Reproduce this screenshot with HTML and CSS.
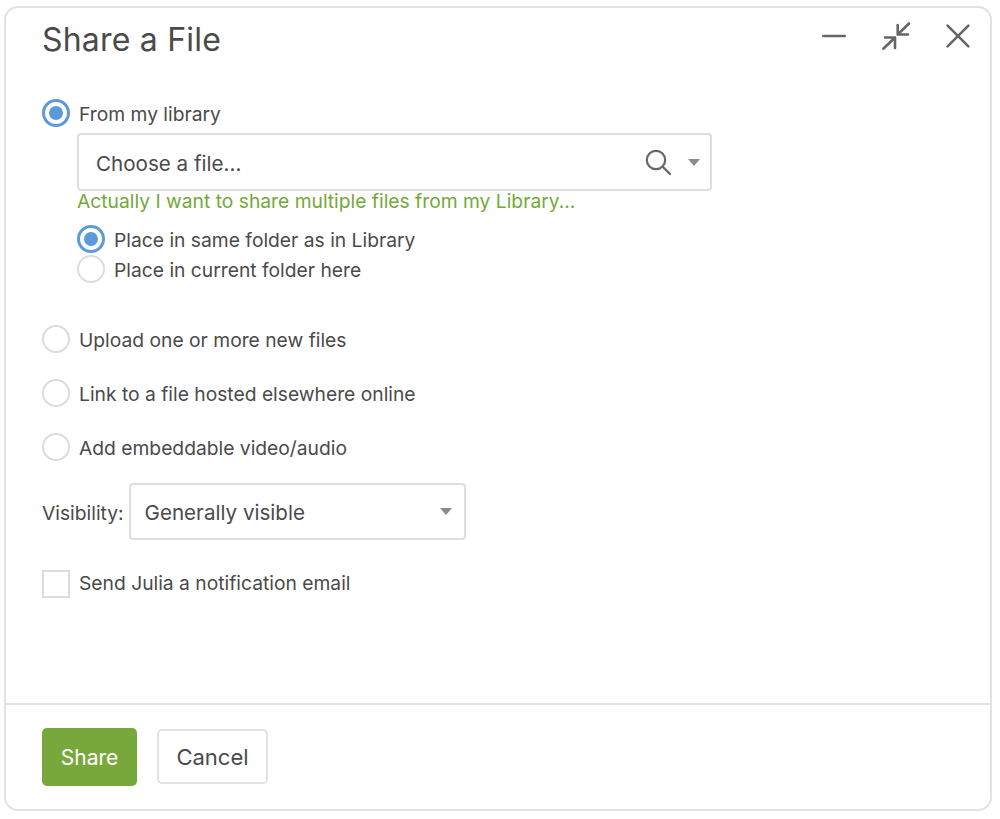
FILE: index.html
```html
<!DOCTYPE html>
<html lang="en">
<head>
<meta charset="utf-8">
<title>Share a File</title>
<link rel="stylesheet" href="styles.css">
</head>
<body>
<div class="dialog">
  <div class="main">
    <header class="head">
      <h1 class="title">Share a File</h1>
      <div class="tools">
        <svg class="tool tool-min" viewBox="0 0 26 26"><path d="M2.3 13H23.7"/></svg>
        <svg class="tool tool-shrink" viewBox="0 0 30 30"><path d="M28 2.5L16.7 13.5M16.7 4V13.5H27M2.3 27.7L14 16.5M4 16.5H14V27"/></svg>
        <svg class="tool tool-close" viewBox="0 0 26 26"><path d="M2.6 2.6L23.4 23.4M23.4 2.6L2.6 23.4"/></svg>
      </div>
    </header>
    <div class="opt opt-first">
      <span class="radio on"></span><span class="lbl">From my library</span>
    </div>
    <div class="sub">
      <div class="select select-file">
        <span class="val val-file">Choose a file...</span>
        <svg class="search" viewBox="0 0 26 26"><circle cx="11" cy="11" r="9.2"/><path d="M17.6 17.6L25 25"/></svg>
        <span class="caret"></span>
      </div>
      <a class="link">Actually I want to share multiple files from my Library...</a>
      <div class="opt opt-s1"><span class="radio on"></span><span class="lbl">Place in same folder as in Library</span></div>
      <div class="opt opt-s2"><span class="radio"></span><span class="lbl">Place in current folder here</span></div>
    </div>
    <div class="opt opt-g1"><span class="radio"></span><span class="lbl">Upload one or more new files</span></div>
    <div class="opt opt-g2"><span class="radio"></span><span class="lbl">Link to a file hosted elsewhere online</span></div>
    <div class="opt opt-g2"><span class="radio"></span><span class="lbl">Add embeddable video/audio</span></div>
    <div class="vis">
      <span class="lbl">Visibility:</span>
      <div class="select select-vis"><span class="val">Generally visible</span><span class="caret"></span></div>
    </div>
    <div class="opt opt-check"><span class="check"></span><span class="lbl lbl-check">Send Julia a notification email</span></div>
  </div>
  <footer class="foot">
    <button class="btn btn-primary">Share</button>
    <button class="btn btn-plain">Cancel</button>
  </footer>
</div>
</body>
</html>
```
FILE: styles.css
```css
* { box-sizing: border-box; }
html, body { margin: 0; height: 100%; background: #fff; }
body {
  padding: 6px 8px 9px 4px;
  font-family: Inter, "Liberation Sans", sans-serif;
  color: #4a4a4a;
}
.dialog {
  height: 805px;
  border: 2px solid #e2e2e2;
  border-radius: 14px;
  display: flex;
  flex-direction: column;
  background: #fff;
}
.main { flex: 1; padding: 0 19px 0 36px; }
.head { display: flex; justify-content: space-between; height: 91px; }
.title { margin: 11px 0 0; font-size: 32px; line-height: 42px; font-weight: 400; letter-spacing: 0.2px; }
.tools { display: flex; align-items: flex-start; }
.tool { fill: none; stroke: #666; stroke-width: 2.6; stroke-linecap: round; stroke-linejoin: round; display: block; }
.tool-min { width: 26px; height: 26px; margin: 15px 0 0; }
.tool-shrink { width: 30px; height: 30px; margin: 13px 0 0 34px; }
.tool-close { width: 26px; height: 26px; margin: 15px 0 0 34px; }
.opt { display: flex; align-items: center; height: 28px; }
.radio {
  width: 28px; height: 28px; flex: none;
  border: 2px solid #dcdcdc; border-radius: 50%;
  background: #fff; margin-right: 9px;
  display: flex; align-items: center; justify-content: center;
}
.radio.on { border: 3px solid #5b9bd9; }
.radio.on::after { content: ""; width: 14px; height: 14px; border-radius: 50%; background: #5b9bd9; }
.check { width: 28px; height: 28px; flex: none; border: 2px solid #dcdcdc; background: #fff; margin-right: 9px; }
.lbl { font-size: 19.25px; line-height: 28px; padding-top: 2px; }
.lbl-check { padding-top: 0; padding-bottom: 2px; }
.sub { padding-left: 35px; }
.select {
  display: flex; align-items: center;
  border: 2px solid #dedede; border-radius: 4px; background: #fff;
}
.select-file { width: 635px; height: 58px; margin-top: 6px; padding: 0 10px 0 17px; }
.val { flex: 1; font-size: 20.6px; line-height: 28px; padding-top: 2px; }
.val-file { padding-top: 3px; }
.search { width: 26px; height: 26px; fill: none; stroke: #666; stroke-width: 2.2; stroke-linecap: round; margin-right: 17px; }
.caret { width: 0; height: 0; border: 6px solid transparent; border-top: 7px solid #8a8a8a; border-bottom: 0; }
.link { display: block; color: #74a83c; font-size: 19.25px; line-height: 28px; margin-top: -4px; }
.opt-s1 { margin-top: 10px; }
.opt-s2 { margin-top: 2px; }
.opt-g1 { margin-top: 42px; }
.opt-g2 { margin-top: 26px; }
.vis { display: flex; align-items: center; margin-top: 22px; }
.vis .lbl { margin-right: 5px; }
.select-vis { width: 337px; height: 57px; padding: 0 12px 0 14px; }
.opt-check { margin-top: 30px; }
.foot { height: 106px; border-top: 2px solid #e2e2e2; padding: 23px 0 0 36px; display: flex; align-items: flex-start; }
.btn { font-family: inherit; border-radius: 5px; padding: 0; }
.btn-primary { width: 95px; height: 58px; background: #78a83c; color: #fff; border: 0; font-size: 21px; }
.btn-plain { width: 111px; height: 55px; margin: 1px 0 0 20px; background: #fff; color: #4a4a4a; border: 2px solid #e2e2e2; font-size: 22px; }
```
